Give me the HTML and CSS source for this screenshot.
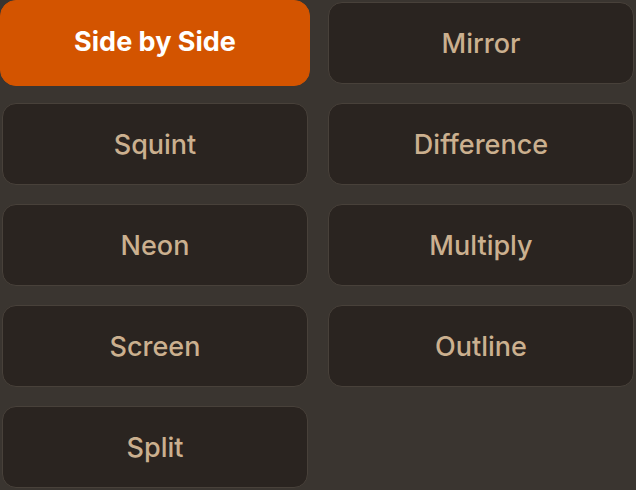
FILE: index.html
```html
<!DOCTYPE html>
<html>
<head>
<meta charset="utf-8">
<link rel="stylesheet" href="styles.css">
</head>
<body>
<div class="modes">
  <button class="mode active">Side by Side</button>
  <button class="mode">Mirror</button>
  <button class="mode">Squint</button>
  <button class="mode">Difference</button>
  <button class="mode">Neon</button>
  <button class="mode">Multiply</button>
  <button class="mode">Screen</button>
  <button class="mode">Outline</button>
  <button class="mode">Split</button>
</div>
</body>
</html>
```
FILE: styles.css
```css
html, body {
  margin: 0;
  padding: 0;
  background: #3a3530;
  width: 636px;
  height: 490px;
  overflow: hidden;
}
.modes {
  display: grid;
  grid-template-columns: 306px 306px;
  grid-auto-rows: 82px;
  column-gap: 20px;
  row-gap: 19px;
  padding: 2px;
}
.mode {
  background: #2a2420;
  border: 1px solid #48413a;
  border-radius: 14px;
  color: #cbb08f;
  font-family: Inter, "Noto Sans", sans-serif;
  font-size: 27px;
  font-weight: 500;
  padding: 0;
  margin: 0;
  cursor: pointer;
}
.mode.active {
  background: #d35400;
  border-color: #d35400;
  color: #ffffff;
  font-weight: 700;
  margin: -2px -2px -2px -2px;
  padding-bottom: 4px;
  border-radius: 16px;
}
```
